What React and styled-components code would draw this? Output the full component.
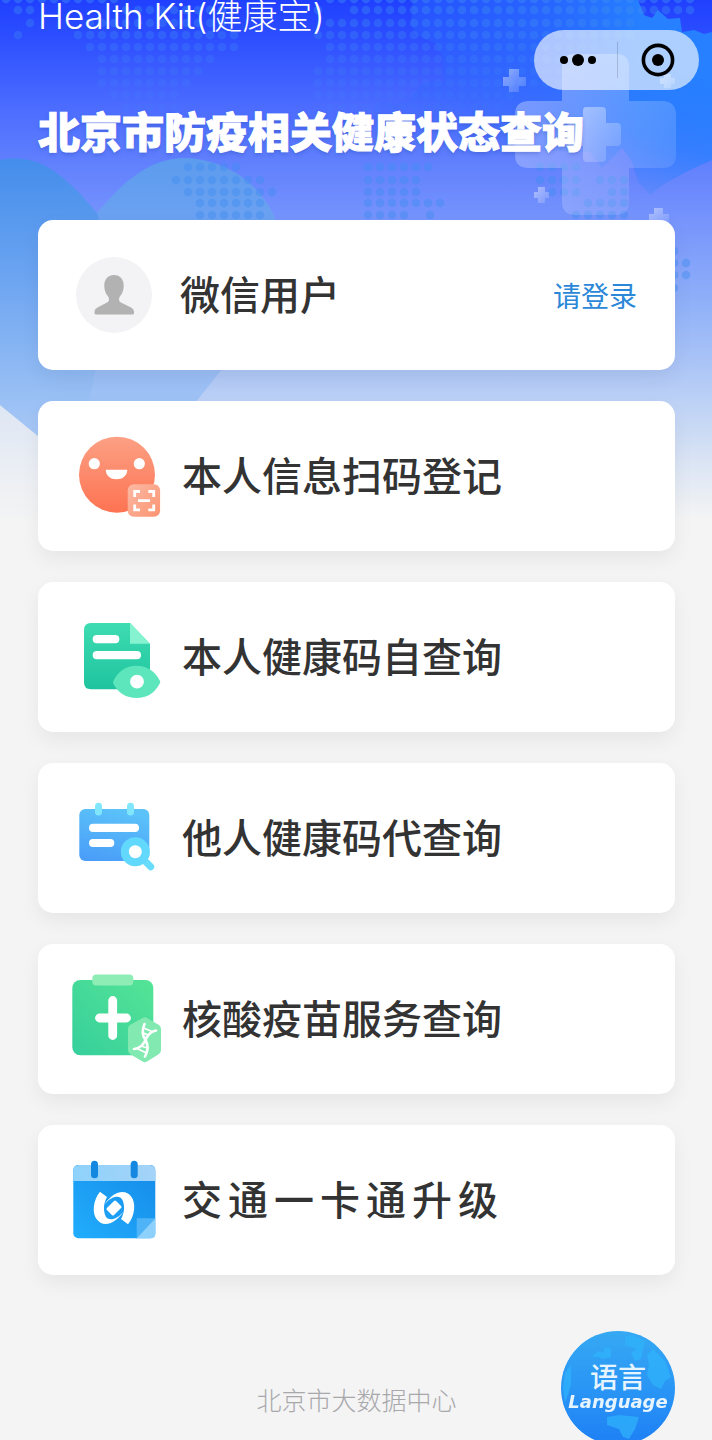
import styled, { createGlobalStyle } from "styled-components";

const GlobalStyle = createGlobalStyle`
    * {
        box-sizing: border-box;
    }

    body {
        margin: 0;
        background-color: #f4f4f4;
        font-family: 'Noto Sans CJK SC', 'Noto Sans', sans-serif;
        color: #333333;
    }

    button {
        border: none;
        padding: 0;
        font-family: inherit;
        color: inherit;
        cursor: pointer;
    }
`;

// [y, first x, last x] of each run of dots on the world map
const DOT_RUNS = [
    [-1, 6, 114], [10, 18, 30], [23, 30, 30], [35, 18, 18],
    [10, 126, 222], [23, 90, 222], [35, 78, 234], [47, 90, 238], [59, 102, 214],
    [71, 102, 202], [83, 102, 190], [95, 114, 182], [107, 126, 178],
    [-1, 330, 690], [10, 318, 318], [10, 354, 690], [23, 330, 640], [35, 318, 640],
    [47, 330, 600], [59, 330, 590], [71, 318, 580], [83, 318, 560], [95, 318, 520],
    [107, 330, 500],
    [167, 188, 238], [180, 176, 262], [192, 188, 274], [203, 200, 262], [215, 200, 262],
    [167, 368, 430], [180, 368, 420], [192, 368, 420], [203, 368, 442], [215, 368, 408], [215, 430, 430],
    [167, 540, 576], [180, 540, 576], [192, 552, 576], [180, 600, 626], [192, 612, 626],
    [203, 588, 626], [215, 576, 626],
    [251, 674, 674], [263, 674, 686], [275, 674, 686], [288, 674, 674],
];

const dots = DOT_RUNS.flatMap(([y, from, to]) => {
    const run = [];
    for (let x = from; x <= to; x += 12) {
        run.push({ x, y });
    }
    return run;
});

const Backdrop = () => (
    <BackdropArt viewBox="0 0 712 520" aria-hidden="true">
        <defs>
            <linearGradient id="sky" x1="0" y1="0" x2="0" y2="1">
                <stop offset="0" stopColor="#2040ff" />
                <stop offset="0.07" stopColor="#2c4eff" />
                <stop offset="0.2" stopColor="#4a6bff" />
                <stop offset="0.4" stopColor="#7290fc" />
                <stop offset="0.6" stopColor="#93b3f8" />
                <stop offset="0.8" stopColor="#c3d6f5" />
                <stop offset="0.92" stopColor="#e2e9f4" />
                <stop offset="1" stopColor="#f4f4f4" />
            </linearGradient>
            <linearGradient id="hill" x1="0" y1="158" x2="0" y2="440" gradientUnits="userSpaceOnUse">
                <stop offset="0" stopColor="#438deb" />
                <stop offset="0.4" stopColor="#6aa3f1" />
                <stop offset="1" stopColor="#a9c9f6" />
            </linearGradient>
            <linearGradient id="hillFar" x1="0" y1="158" x2="0" y2="440" gradientUnits="userSpaceOnUse">
                <stop offset="0" stopColor="#5c9bee" />
                <stop offset="0.3" stopColor="#72a4f3" />
                <stop offset="0.75" stopColor="#98bdf5" />
                <stop offset="1" stopColor="#a9c9f6" />
            </linearGradient>
            <linearGradient id="land" x1="400" y1="0" x2="640" y2="0" gradientUnits="userSpaceOnUse">
                <stop offset="0" stopColor="#2a66ff" stopOpacity="0.45" />
                <stop offset="0.6" stopColor="#2a70ff" stopOpacity="0.75" />
                <stop offset="1" stopColor="#2680ff" />
            </linearGradient>
            <linearGradient id="landFade" x1="640" y1="60" x2="600" y2="195" gradientUnits="userSpaceOnUse">
                <stop offset="0" stopColor="#fff" />
                <stop offset="0.5" stopColor="#bbb" />
                <stop offset="1" stopColor="#000" />
            </linearGradient>
            <mask id="landMask">
                <rect width="712" height="220" fill="url(#landFade)" />
            </mask>
            <linearGradient id="cross" x1="0" y1="0" x2="1" y2="1">
                <stop offset="0" stopColor="#fff" stopOpacity="0.36" />
                <stop offset="1" stopColor="#fff" stopOpacity="0.06" />
            </linearGradient>
            <linearGradient id="crossSmall" x1="0" y1="0" x2="1" y2="1">
                <stop offset="0" stopColor="#fff" stopOpacity="0.45" />
                <stop offset="1" stopColor="#fff" stopOpacity="0.1" />
            </linearGradient>
        </defs>
        <rect width="712" height="520" fill="url(#sky)" />
        <path
            fill="url(#land)"
            mask="url(#landMask)"
            d="M413 0 L411 22 L415 34 L425 39 L436 44 L443 58 L444 82 L432 80 L420 86 L410 98 L396 104 L380 102 L372 110 L390 150 L430 155 L470 160 L520 150 L590 152 L602 168 L622 148 L632 162 L638 182 L650 195 L664 184 L690 170 L712 160 V32 L704 34 L694 30 L682 32 L680 18 L668 19 L658 10 L652 18 L644 15 L638 0 Z"
        />
        <path fill="#f4f4f4" opacity="0.6" d="M0 405 L38 436 L110 500 V520 H0 Z" />
        <path
            fill="url(#hillFar)"
            d="M97 213 C125 180 150 158 186 158 C230 160 262 186 277 222 C290 290 245 340 196 402 L110 500 L60 452 Z"
        />
        <path
            fill="url(#hill)"
            d="M0 160 C40 152 66 176 97 213 C120 280 100 340 90 400 L60 456 L38 436 L0 405 Z"
        />
        {dots.map((dot) => (
            <circle
                key={`${dot.x}-${dot.y}`}
                cx={dot.x}
                cy={dot.y}
                r="4.3"
                fill="#3f8df0"
                opacity={dot.y > 150 ? 0.42 : 0.42 - dot.y * 0.0032}
            />
        ))}
        <path
            fill="url(#cross)"
            d="M574 54 H616 Q629 54 629 67 V101 H662 Q676 101 676 115 V155 Q676 168 662 168 H629 V202 Q629 215 616 215 H576 Q562 215 562 202 V168 H529 Q515 168 515 155 V115 Q515 101 529 101 H562 V67 Q562 54 574 54 Z"
        />
        <path
            fill="url(#crossSmall)"
            d="M586 107 H602 Q606 107 606 111 V123 H617 Q621 123 621 127 V142 Q621 146 617 146 H606 V158 Q606 162 602 162 H587 Q583 162 583 158 V146 H571 Q567 146 567 142 V127 Q567 123 571 123 H583 V111 Q583 107 586 107 Z"
        />
        <g fill="url(#crossSmall)">
            <path d="M509 69 H519 V77 H526 V86 H519 V92 H509 V86 H503 V77 H509 Z" />
            <path d="M538 187 H545 V192 H549 V198 H545 V203 H538 V198 H534 V192 H538 Z" />
            <path d="M654 208 H663 V214 H669 V222 H649 V214 H654 Z" />
            <path d="M664 74 H671 V78 H675 V84 H671 V88 H664 V84 H660 V78 H664 Z" />
        </g>
    </BackdropArt>
);

const ScanIcon = () => (
    <Icon viewBox="0 0 100 100" aria-hidden="true">
        <defs>
            <linearGradient id="face" x1="0" y1="0" x2="0" y2="1">
                <stop offset="0" stopColor="#fca084" />
                <stop offset="1" stopColor="#fd7352" />
            </linearGradient>
            <linearGradient id="scanBadge" x1="0" y1="0" x2="1" y2="1">
                <stop offset="0" stopColor="#fcb9a4" />
                <stop offset="1" stopColor="#fb9472" />
            </linearGradient>
        </defs>
        <circle cx="49" cy="48.7" r="38" fill="url(#face)" />
        <circle cx="26.3" cy="37.7" r="5.6" fill="#fff" />
        <circle cx="71.3" cy="37.7" r="5.6" fill="#fff" />
        <path d="M37.7 43.7 H59.3 C59 50 54.5 53.2 48.5 53.2 C42.5 53.2 38 50 37.7 43.7 Z" fill="#fff" />
        <rect x="59.7" y="58.3" width="32.4" height="32.4" rx="6" fill="url(#scanBadge)" />
        <path
            d="M72 65.5 H66.7 V71 M80.3 65.5 H85.7 V71 M72 83.8 H66.7 V78.5 M80.3 83.8 H85.7 V78.5 M70 74.7 H82"
            fill="none"
            stroke="#fff"
            strokeWidth="2.8"
        />
    </Icon>
);

const SelfQueryIcon = () => (
    <Icon viewBox="0 0 100 100" aria-hidden="true">
        <defs>
            <linearGradient id="doc" x1="0" y1="0" x2="0" y2="1">
                <stop offset="0" stopColor="#3edcb1" />
                <stop offset="1" stopColor="#1ec49f" />
            </linearGradient>
        </defs>
        <path
            d="M23 16 H62 L82 36.7 V75.3 Q82 82.3 75 82.3 H23 Q16 82.3 16 75.3 V23 Q16 16 23 16 Z"
            fill="url(#doc)"
        />
        <path d="M62 16 L82 36.7 H62 Z" fill="#86f3d0" />
        <rect x="24.7" y="28" width="26.6" height="8.3" rx="4.1" fill="#fff" />
        <rect x="24.7" y="44" width="48.3" height="8.3" rx="4.1" fill="#fff" />
        <path
            d="M45 74.7 C50 64 58 58.7 68.7 58.7 C79 58.7 87 64 92 74 Q92.5 75 92 76 C87 86 79 91 68.7 91 C58 91 50 86 45 76 Z"
            fill="#5de6bb"
        />
        <circle cx="69" cy="74.7" r="6.9" fill="#fff" />
    </Icon>
);

const OtherQueryIcon = () => (
    <Icon viewBox="0 0 100 100" aria-hidden="true">
        <defs>
            <linearGradient id="note" x1="0.6" y1="0" x2="0.3" y2="1">
                <stop offset="0" stopColor="#5cc3f9" />
                <stop offset="1" stopColor="#4a9ef8" />
            </linearGradient>
        </defs>
        <rect x="11.3" y="21" width="70" height="52" rx="6" fill="url(#note)" />
        <rect x="27" y="14.7" width="7" height="12.8" rx="3.5" fill="#80e6fb" />
        <rect x="59" y="14.7" width="7" height="12.8" rx="3.5" fill="#80e6fb" />
        <rect x="21" y="35.7" width="50" height="8.3" rx="4.1" fill="#fff" />
        <rect x="21" y="51" width="25.3" height="8" rx="4" fill="#fff" />
        <path d="M76 72 L82.7 78.7" stroke="#69dbfb" strokeWidth="7" strokeLinecap="round" />
        <circle cx="67.3" cy="63.7" r="14.5" fill="#62d9fc" />
        <circle cx="67.3" cy="63.7" r="6.5" fill="#fff" />
    </Icon>
);

const VaccineIcon = () => (
    <Icon viewBox="0 0 100 100" aria-hidden="true">
        <defs>
            <linearGradient id="kit" x1="0" y1="1" x2="1" y2="0">
                <stop offset="0" stopColor="#36cf9c" />
                <stop offset="1" stopColor="#55e496" />
            </linearGradient>
        </defs>
        <rect x="4.3" y="11" width="81" height="75.3" rx="8" fill="url(#kit)" />
        <rect x="24.3" y="5.5" width="41" height="11" rx="4" fill="#8eedb5" />
        <path d="M44.7 31.5 V66.5 M31.5 49 H58.5" stroke="#fff" strokeWidth="8.8" strokeLinecap="round" />
        <path
            d="M74.5 49 Q76.7 47.5 79 49 L91 56 Q93 57.500 93 60 V81 Q93 83.5 91 85 L79 92.5 Q76.7 94 74.5 92.5 L62 85 Q60 83.5 60 81 V60 Q60 57.5 62 56 Z"
            fill="#82e9b0"
        />
        <g fill="none" stroke="#fff" strokeLinecap="round">
            <path
                d="M76.5 55 C73.5 62 74.500 67 77.5 71 C80.5 76 80 82 77 87.5 M88 61.5 C82 62.5 79.5 66 77.5 71 C75 76.5 72 79.5 66 80"
                strokeWidth="2.6"
            />
            <path d="M75.5 59 L84 62.5 M75.5 64 L80 66 M73 77 L79.5 79 M70 80 L78.5 84" strokeWidth="1.8" />
        </g>
    </Icon>
);

const TransitIcon = () => (
    <Icon viewBox="0 0 100 100" aria-hidden="true">
        <defs>
            <linearGradient id="transit" x1="0" y1="1" x2="1" y2="0">
                <stop offset="0" stopColor="#21adfd" />
                <stop offset="1" stopColor="#158be8" />
            </linearGradient>
            <linearGradient id="transitBand" x1="0" y1="0" x2="1" y2="0">
                <stop offset="0" stopColor="#8fd2fb" />
                <stop offset="1" stopColor="#a4d3f8" />
            </linearGradient>
        </defs>
        <rect x="5.3" y="15" width="82" height="73.3" rx="5" fill="url(#transit)" />
        <path d="M11 15 H81.5 Q87.3 15 87.3 21 V31 H5.3 V21 Q5.3 15 11 15 Z" fill="url(#transitBand)" />
        <rect x="23" y="10.7" width="7" height="17.5" rx="3.5" fill="#1487e0" />
        <rect x="62.7" y="10.7" width="7" height="17.5" rx="3.5" fill="#1487e0" />
        <path d="M68.7 68.3 H87.3 L68.7 88.3 Z" fill="#4eb4f7" />
        <path d="M87.3 68.3 V84 Q87.3 88.3 83 88.3 H68.7 Z" fill="#8dd0fb" />
        <g fill="#fff">
            <path d="M32 41.7 C25 50 24 63 28.5 69 C34 77 46 76 56 61 C48 71 40 71 37.5 66 C35 60 35.5 53 39 47 Z" />
            <path
                transform="rotate(180 46 58)"
                d="M32 41.7 C25 50 24 63 28.5 69 C34 77 46 76 56 61 C48 71 40 71 37.5 66 C35 60 35.5 53 39 47 Z"
            />
            <rect x="39.5" y="53" width="13" height="10" rx="1.5" transform="rotate(-45 46 58)" />
        </g>
    </Icon>
);

const services = [
    { label: "本人信息扫码登记", icon: ScanIcon },
    { label: "本人健康码自查询", icon: SelfQueryIcon },
    { label: "他人健康码代查询", icon: OtherQueryIcon },
    { label: "核酸疫苗服务查询", icon: VaccineIcon },
    { label: "交通一卡通升级", icon: TransitIcon, wide: true },
];

const App = () => (
    <Page>
        <GlobalStyle />
        <Backdrop />
        <Capsule>
            <CapsuleButton type="button" aria-label="更多">
                <svg width="36" height="12" viewBox="0 0 36 12">
                    <circle cx="4" cy="6" r="4" />
                    <circle cx="18" cy="6" r="6" />
                    <circle cx="32" cy="6" r="4" />
                </svg>
            </CapsuleButton>
            <CapsuleButton type="button" aria-label="关闭" $divided>
                <svg width="34" height="34" viewBox="0 0 34 34">
                    <circle cx="17" cy="17" r="14.6" fill="none" stroke="#000" strokeWidth="3.6" />
                    <circle cx="17" cy="17" r="6" />
                </svg>
            </CapsuleButton>
        </Capsule>
        <Content>
            <header>
                <AppName>Health Kit(健康宝)</AppName>
                <Title>北京市防疫相关健康状态查询</Title>
            </header>
            <CardList>
                <UserCard>
                    <Avatar viewBox="0 0 76 76" aria-hidden="true">
                        <circle cx="38" cy="38" r="38" fill="#f3f3f5" />
                        <path
                            d="M38 18 C44 18 48 22.5 47.7 29 C47.5 35 45.5 37.5 43.5 40 C42.500 43 43 44.5 45 45.5 L55 50.5 Q58 52 58 54.5 V56 Q58 57.5 56.5 57.5 H20 Q18.500 57.5 18.5 56 V54.5 Q18.5 52 21.5 50.5 L31 45.5 C33 44.5 33.5 43 32.5 40 C30.5 37.5 28.5 35 28.3 29 C28 22.5 32 18 38 18 Z"
                            fill="#b2b2b2"
                        />
                    </Avatar>
                    <CardLabel>微信用户</CardLabel>
                    <LoginLink href="#login">请登录</LoginLink>
                </UserCard>
                {services.map(({ label, icon: ServiceIcon, wide }) => (
                    <ServiceCard type="button" key={label}>
                        <ServiceIcon />
                        <CardLabel $wide={wide}>{label}</CardLabel>
                    </ServiceCard>
                ))}
            </CardList>
            <Footer>北京市大数据中心</Footer>
        </Content>
        <LanguageButton type="button">
            <Globe viewBox="0 0 114 114" aria-hidden="true">
                <path d="M64 6 L72 4 L84 10 L82 18 L80 28 L74 30 L70 22 L76 18 L64 14 Z M32 24 L38 20 L42 22 L44 16 L50 18 L50 26 L42 28 L38 26 L32 26 Z M86 24 L92 18 L104 30 L110 46 L104 50 L100 58 L92 54 L86 44 L88 34 Z M46 86 L58 84 L78 86 L74 98 L68 108 L62 106 L58 98 L46 94 Z M4 42 L10 34 L10 54 L4 72 L2 56 Z" />
            </Globe>
            <LanguageName>语言</LanguageName>
            <LanguageCaption>Language</LanguageCaption>
        </LanguageButton>
    </Page>
);

const Page = styled.div`
    position: relative;
    min-height: 100vh;
    overflow: hidden;
`;

const BackdropArt = styled.svg`
    position: absolute;
    top: 0;
    left: 0;
    width: 100%;
    height: auto;
`;

const Capsule = styled.div`
    position: absolute;
    top: 30px;
    right: 13px;
    z-index: 1;
    display: flex;
    align-items: center;
    width: 165px;
    height: 60px;
    border-radius: 30px;
    background-color: rgba(255, 255, 255, 0.62);
`;

const CapsuleButton = styled.button`
    flex: 1;
    display: flex;
    align-items: center;
    justify-content: center;
    height: 36px;
    background: transparent;
    border-left: ${(props) => (props.$divided ? "1px solid rgba(0, 0, 0, 0.15)" : "none")};
    padding-left: ${(props) => (props.$divided ? "0" : "4px")};
    padding-right: ${(props) => (props.$divided ? "2px" : "0")};
`;

const Content = styled.main`
    position: relative;
    padding: 0 37px 0 38px;
`;

const AppName = styled.p`
    margin: 0;
    font-family: Inter, 'Noto Sans CJK SC', sans-serif;
    font-size: 35px;
    font-weight: 300;
    line-height: 32px;
    color: #ffffff;
`;

const Title = styled.h1`
    margin: 68px 0 60px;
    font-size: 42px;
    font-weight: 900;
    line-height: 60px;
    white-space: nowrap;
    color: #ffffff;
    -webkit-text-stroke: 1px #ffffff;
    text-shadow: 0 2px 4px rgba(30, 60, 160, 0.35);
`;

const CardList = styled.div`
    display: flex;
    flex-direction: column;
    gap: 31px;
`;

const UserCard = styled.section`
    display: flex;
    align-items: center;
    gap: 28px;
    height: 150px;
    padding: 0 38px;
    border-radius: 15px;
    background-color: #ffffff;
    box-shadow: 0 8px 20px rgba(0, 0, 0, 0.06);
`;

const ServiceCard = styled(UserCard).attrs({ as: "button" })`
    gap: 14px;
    padding: 0 30px;
    text-align: left;
`;

const Avatar = styled.svg`
    flex: none;
    width: 76px;
    height: 76px;
`;

const Icon = styled.svg`
    flex: none;
    width: 100px;
    height: 100px;
`;

const CardLabel = styled.span`
    padding-bottom: 4px;
    font-size: 40px;
    font-weight: 500;
    line-height: 60px;
    letter-spacing: ${(props) => (props.$wide ? "6px" : "normal")};
    color: #333333;
`;

const LoginLink = styled.a`
    margin-left: auto;
    font-size: 28px;
    line-height: 40px;
    text-decoration: none;
    color: #2b87d8;
`;

const Footer = styled.footer`
    padding: 106px 0 20px;
    font-size: 25px;
    font-weight: 300;
    line-height: 36px;
    text-align: center;
    color: #a8a8ac;
`;

const LanguageButton = styled.button`
    position: fixed;
    right: 37px;
    bottom: -5px;
    display: flex;
    flex-direction: column;
    align-items: center;
    justify-content: center;
    width: 114px;
    height: 114px;
    padding-bottom: 4px;
    border-radius: 50%;
    overflow: hidden;
    background: linear-gradient(#36a9f3, #2a96f5 50%, #1f80f5);
`;

const Globe = styled.svg`
    position: absolute;
    inset: 0;
    fill: #2fb4fb;
    opacity: 0.7;
`;

const LanguageName = styled.span`
    position: relative;
    font-size: 28px;
    font-weight: 500;
    line-height: 32px;
    color: #e6f4ff;
`;

const LanguageCaption = styled.span`
    position: relative;
    font-family: 'DejaVu Sans', sans-serif;
    font-size: 18px;
    font-weight: 700;
    font-style: italic;
    line-height: 20px;
    color: #e6f4ff;
`;

export default App;
